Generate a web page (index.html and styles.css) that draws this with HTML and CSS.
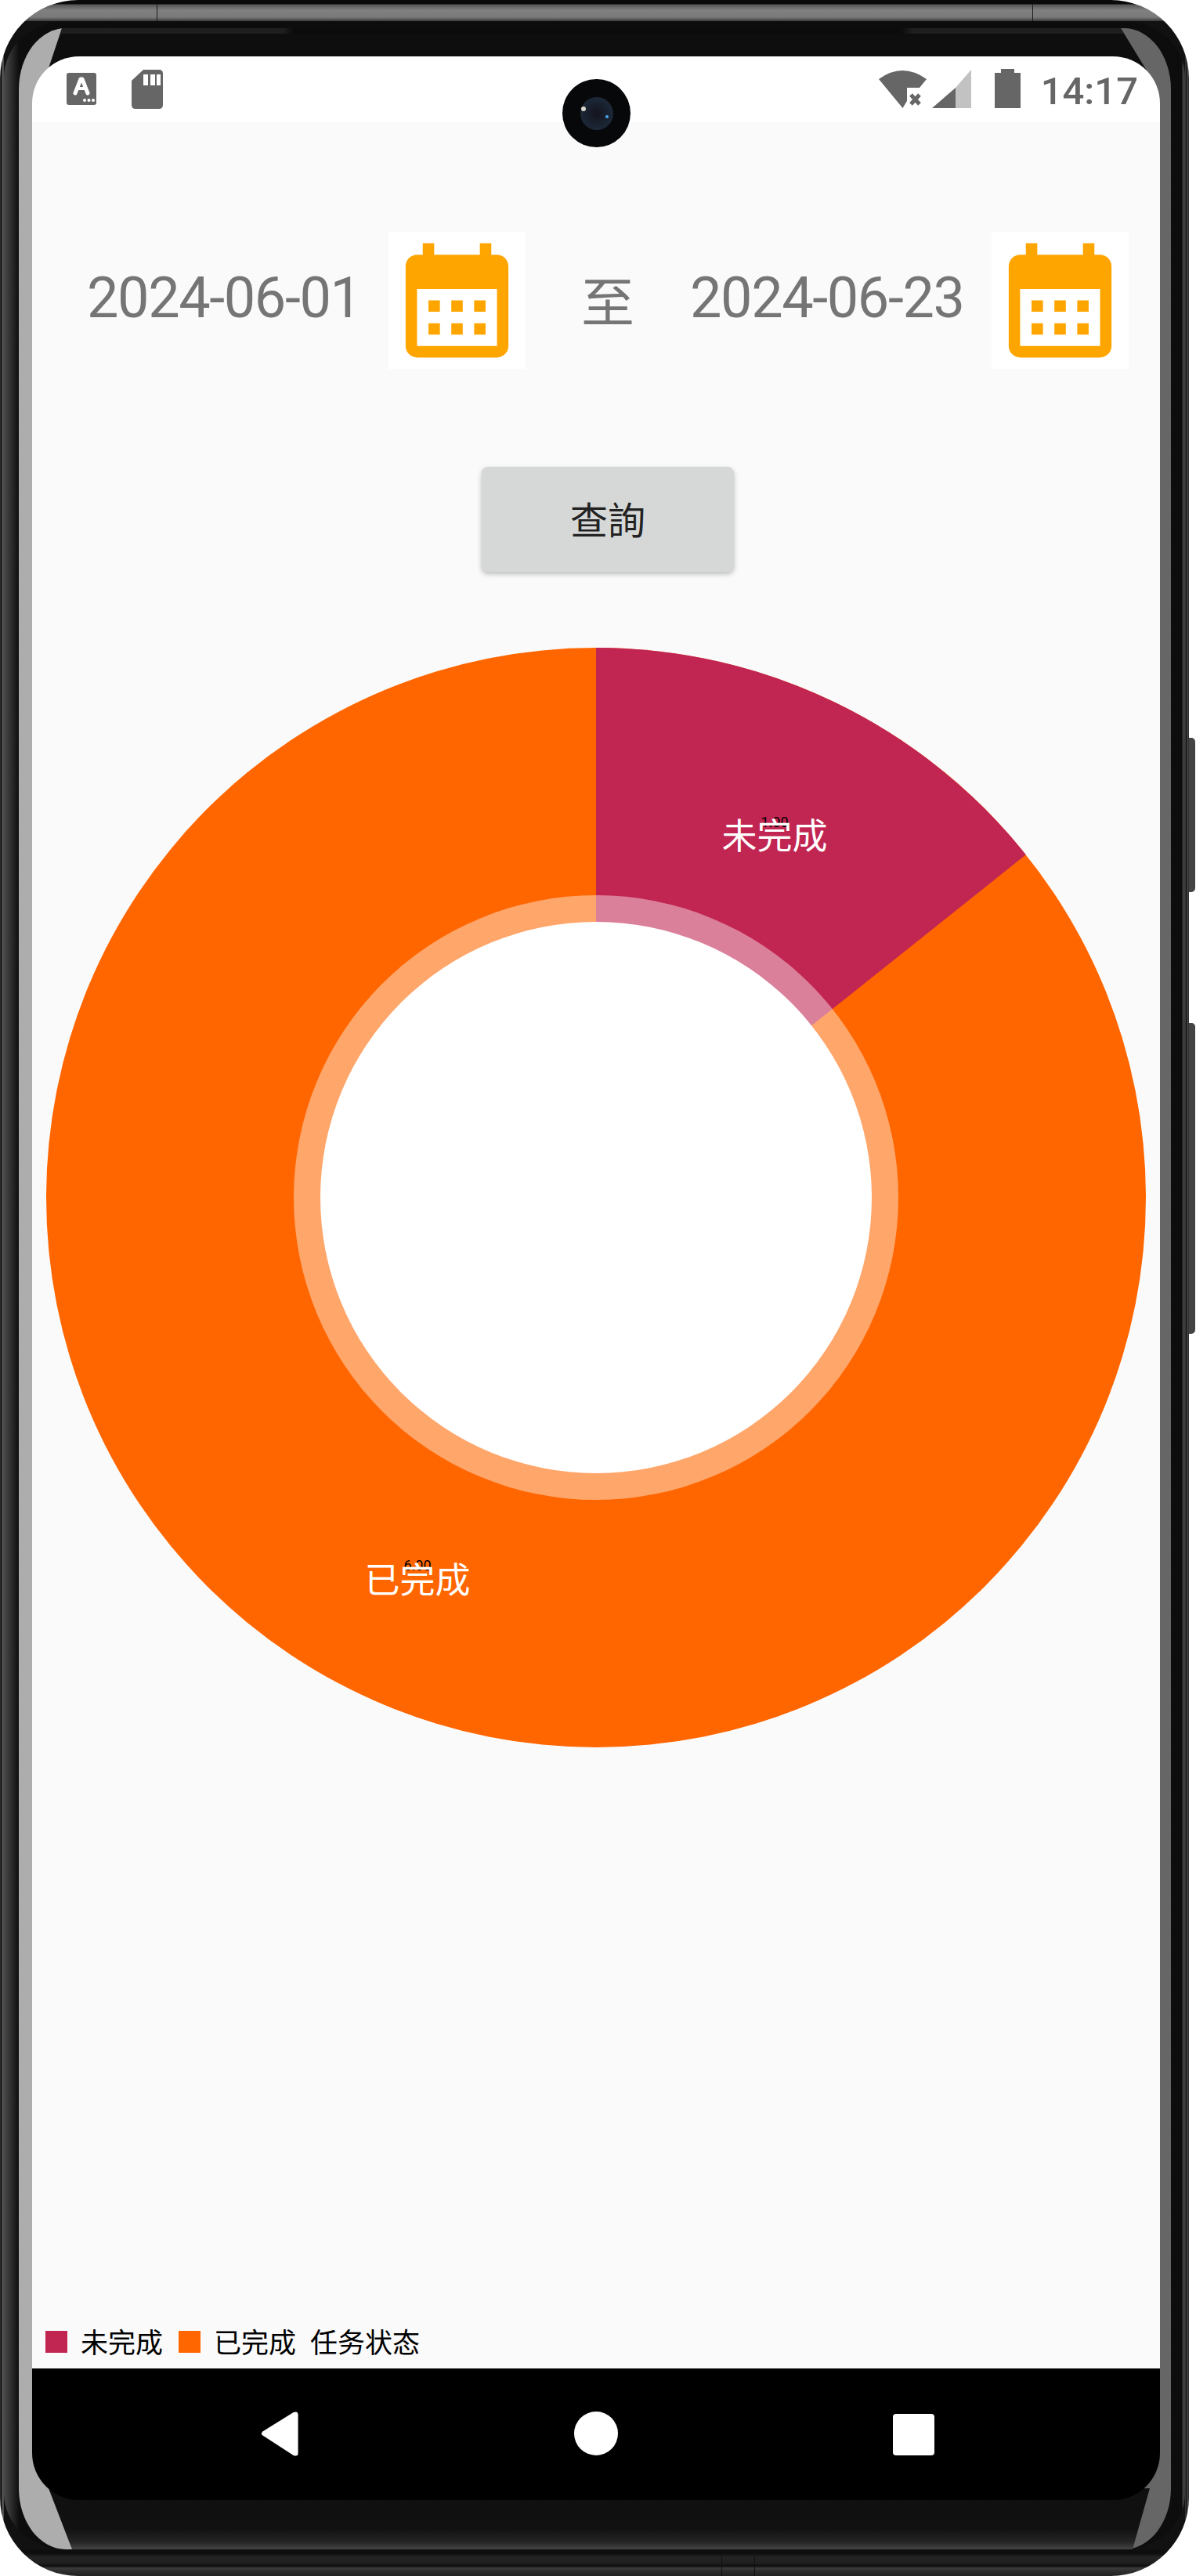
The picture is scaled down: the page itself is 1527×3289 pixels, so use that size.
FILE: index.html
```html
<!DOCTYPE html>
<html lang="zh-CN">
  <head>
    <title>任务状态</title>
    <meta charset="UTF-8">
    <link rel="stylesheet" href="styles.css">
  </head>
  <body>
    <div class="side-key side-key-short"></div>
    <div class="side-key side-key-long"></div>
    <div class="phone">
      <div class="bezel">
        <div class="glass">
          <div class="wedge-top"><i class="earpiece"></i></div>
          <div class="wedge-bottom"></div>
          <div class="screen">
            <header class="status-bar">
              <div class="status-left">
                <svg class="ico-a" viewBox="0 0 38 41"><rect width="38" height="41" rx="3" fill="#666"/><path d="M11 26 L18 8 H20 L27 26" fill="none" stroke="#fff" stroke-width="5" stroke-linecap="round" stroke-linejoin="round"/><path d="M13 20 H25" stroke="#fff" stroke-width="4"/><circle cx="23" cy="35" r="2" fill="#fff"/><circle cx="28.5" cy="35" r="2" fill="#fff"/><circle cx="34" cy="35" r="2" fill="#fff"/></svg>
                <svg class="ico-sd" viewBox="0 0 40 50"><path d="M15 0 H35 Q40 0 40 5 V45 Q40 50 35 50 H5 Q0 50 0 45 V14 Z" fill="#666"/><path d="M15 6 h6 v14 h-6z M24 6 h6 v14 h-6z M32 6 h5 v14 h-5z" fill="#fff"/></svg>
              </div>
              <div class="status-right">
                <svg class="ico-wifi" viewBox="0 0 61 48"><path d="M0 11 Q30 -11 61 11 L52 22 H36 V39 L30.500 48 Z" fill="#666"/><path d="M41 27 L52 39 M52 27 L41 39" stroke="#666" stroke-width="5" transform="translate(0 4)"/></svg>
                <svg class="ico-signal" viewBox="0 0 50 49"><path d="M50 0 V49 H30 V23 Z" fill="#c2c2c2"/><path d="M30 23 V49 H0 Z" fill="#666"/></svg>
                <svg class="ico-battery" viewBox="0 0 33 50"><path d="M8 0 H25 V5 H33 V50 H0 V5 H8 Z" fill="#666"/></svg>
                <span class="clock">14:17</span>
              </div>
            </header>

            <main class="content">
              <div class="range-row">
                <span class="date-text">2024-06-01</span>
                <div class="cal-btn">
                  <svg viewBox="0 -1 24 24"><path class="cal-shape" d="M19 3h-1V1h-2v2H8V1H6v2H5C3.890 3 3 3.900 3 5v14c0 1.100.890 2 2 2h14c1.100 0 2-.9 2-2V5c0-1.100-.9-2-2-2zm0 16H5V9h14v10zM7 11h2v2H7zm4 0h2v2h-2zm4 0h2v2h-2zM7 15h2v2H7zm4 0h2v2h-2zm4 0h2v2h-2z"/></svg>
                </div>
                <span class="range-to">至</span>
                <span class="date-text">2024-06-23</span>
                <div class="cal-btn">
                  <svg viewBox="0 -1 24 24"><path class="cal-shape" d="M19 3h-1V1h-2v2H8V1H6v2H5C3.890 3 3 3.900 3 5v14c0 1.100.890 2 2 2h14c1.100 0 2-.9 2-2V5c0-1.100-.9-2-2-2zm0 16H5V9h14v10zM7 11h2v2H7zm4 0h2v2h-2zm4 0h2v2h-2zM7 15h2v2H7zm4 0h2v2h-2zm4 0h2v2h-2z"/></svg>
                </div>
              </div>

              <button class="query-btn">查詢</button>

              <svg class="donut" viewBox="0 0 1404 1404">
                <circle cx="702" cy="702" r="702" fill="#ff6600"/>
                <path d="M702 702 V0 A702 702 0 0 1 1250.800 264.300 Z" fill="#c12552"/>
                <circle cx="702" cy="702" r="386" fill="#fff" fill-opacity="0.42"/>
                <circle cx="702" cy="702" r="352" fill="#fff"/>
                <text class="val" x="930" y="229">1.00</text>
                <text class="lbl" x="930" y="257">未完成</text>
                <text class="val" x="474" y="1178">6.00</text>
                <text class="lbl" x="474" y="1207">已完成</text>
              </svg>

              <div class="legend">
                <i class="swatch swatch-todo"></i><span class="legend-text">未完成</span>
                <i class="swatch swatch-done"></i><span class="legend-text">已完成</span>
                <span class="legend-text legend-title">任务状态</span>
              </div>
            </main>

            <nav class="nav-bar">
              <svg class="nav-back" viewBox="0 0 50 58"><path d="M3 31 Q0 29 3 26 L43 1 Q49 -1 49 4 V54 Q49 59 43 57 Z" fill="#fff"/></svg>
              <i class="nav-home"></i>
              <i class="nav-recent"></i>
            </nav>
          </div>
        </div>
      </div>
      <div class="camera"><div class="lens"><i class="glint glint-a"></i><i class="glint glint-b"></i></div></div>
    </div>
  </body>
</html>
```

FILE: styles.css
```css
:root {
  --font-body: "Roboto", "Noto Sans CJK SC", sans-serif;
  --font-cjk: "Noto Sans CJK SC", "Roboto", sans-serif;
  --color-grey: #757575;
  --color-icon: #666;
}

html, body {
  margin: 0;
  height: 100%;
}

body {
  background-color: #fff;
  width: 1527px;
  height: 3289px;
  overflow: hidden;
  position: relative;
}

/* phone frame: rim > bezel > glass > screen */
.phone {
  width: 1518px;
  height: 3289px;
  box-sizing: border-box;
  padding: 27px 5px 34px 5px;
  border-radius: 100px / 100px;
  background:
    linear-gradient(#1c1c1c, #1c1c1c) no-repeat 200px 5px / 1px 22px,
    linear-gradient(#1c1c1c, #1c1c1c) no-repeat 1318px 5px / 1px 22px,
    linear-gradient(#111, #111) no-repeat 921px 3255px / 1px 34px,
    linear-gradient(#111, #111) no-repeat 963px 3255px / 1px 34px,
    linear-gradient(to bottom, #0a0a0a 0, #0a0a0a 5px, #555 6px, #808080 13px, #7a7a7a 22px, #3a3a3a 27px, transparent 27px),
    linear-gradient(to top, #222 0, #2e2e2e 6px, #3a3a3a 10px, #0d0d0d 13px, #1e1e1e 16px, #242424 24px, #0e0e0e 29px, #0e0e0e 34px, transparent 34px),
    linear-gradient(to right, #333 0, #111 2px, #777 4px, #222 5px, transparent 5px),
    linear-gradient(to left, #222 0, #555 2px, #0a0a0a 3px, #444 5px, transparent 5px),
    #111;
  position: relative;
  overflow: hidden;
}

.bezel {
  height: 100%;
  box-sizing: border-box;
  padding: 9px 18px 0 19px;
  border-radius: 78px / 72px;
  background:
    linear-gradient(to right, #4a4a4a 0, #121212 18px, transparent 19px),
    linear-gradient(to left, #3c3c3c 0, #3c3c3c 3px, #0c0c0c 4px, transparent 18px),
    #0d0d0d;
}

.glass {
  height: 100%;
  box-sizing: border-box;
  padding: 36px 14px 63px 17px;
  border-radius: 60px / 78px;
  background: linear-gradient(to right, #adadad 50%, #666 50%);
  position: relative;
}

.wedge-top {
  position: absolute;
  top: 0;
  left: 37px;
  width: 1403px;
  height: 54px;
  background-color: #0e0e0e;
  clip-path: polygon(18px 0, calc(100% - 33px) 0, 100% 100%, 0 100%);
}

.earpiece {
  position: absolute;
  top: 0;
  left: 0;
  width: 100%;
  height: 7px;
  background: linear-gradient(to right, #2a2a2a 0, #2a2a2a 300px, #0a0a0a 314px, #0a0a0a 1090px, #2a2a2a 1104px);
  opacity: 0.6;
}

.wedge-bottom {
  position: absolute;
  bottom: 0;
  left: 38px;
  width: 1406px;
  height: 78px;
  background: linear-gradient(to bottom, #0f0f0f 0, #111 66%, #252525 88%, #454545 100%);
  clip-path: polygon(0 0, 100% 0, calc(100% - 22px) 100%, 30px 100%);
}

.screen {
  height: 100%;
  display: flex;
  flex-direction: column;
  border-radius: 60px / 60px;
  overflow: hidden;
  position: relative;
}

.side-key {
  position: absolute;
  left: 1517px;
  width: 9px;
  background: #444;
  border-radius: 0 5px 5px 0;
}

.side-key-short {
  top: 942px;
  height: 197px;
}

.side-key-long {
  top: 1306px;
  height: 397px;
}

/* status bar */
.status-bar {
  height: 84px;
  background-color: #fff;
  display: flex;
  justify-content: space-between;
  flex-shrink: 0;
}

.status-left {
  display: flex;
  gap: 45px;
  padding-left: 44px;
  align-items: flex-start;
}

.ico-a {
  width: 38px;
  height: 41px;
  margin-top: 21px;
}

.ico-sd {
  width: 40px;
  height: 50px;
  margin-top: 17px;
}

.status-right {
  display: flex;
  align-items: flex-start;
  padding-right: 28px;
}

.ico-wifi {
  width: 61px;
  height: 48px;
  margin-top: 18px;
}

.ico-signal {
  width: 50px;
  height: 49px;
  margin: 17px 0 0 7px;
}

.ico-battery {
  width: 33px;
  height: 50px;
  margin: 16px 0 0 30px;
}

.clock {
  font-family: var(--font-body);
  font-size: 49px;
  font-weight: 500;
  line-height: 50px;
  color: var(--color-icon);
  margin: 20px 0 0 26px;
}

/* app content */
.content {
  flex: 1;
  background-color: #fafafa;
  position: relative;
  display: flex;
  flex-direction: column;
  align-items: flex-start;
}

.range-row {
  display: flex;
  align-items: center;
  margin-top: 140px;
  padding-left: 70px;
  height: 175px;
}

.date-text {
  font-family: var(--font-body);
  font-size: 72px;
  letter-spacing: -1.4px;
  color: var(--color-grey);
  line-height: 82px;
  width: 385px;
  margin-top: -6px;
  white-space: nowrap;
}

.cal-btn {
  width: 175px;
  height: 175px;
  background-color: #fff;
  flex-shrink: 0;
}

.cal-btn svg {
  display: block;
  width: 175px;
  height: 175px;
}

.cal-shape {
  fill: #ffa500;
}

.range-to {
  font-family: var(--font-cjk);
  font-size: 68px;
  color: var(--color-grey);
  width: 210px;
  text-align: center;
  margin-top: -4px;
  line-height: 82px;
}

.query-btn {
  font-family: var(--font-cjk);
  font-size: 48px;
  color: #222;
  background-color: #d6d8d7;
  border: 0;
  border-radius: 8px;
  width: 322px;
  height: 134px;
  margin: 125px 0 0 574px;
  padding: 0 0 5px;
  box-shadow: 0 3px 6px rgba(0, 0, 0, 0.25);
}

.donut {
  position: absolute;
  left: 18px;
  top: 671px;
  width: 1404px;
  height: 1404px;
}

.val {
  font-family: var(--font-body);
  font-size: 18px;
  fill: #000;
  text-anchor: middle;
}

.lbl {
  font-family: var(--font-cjk);
  font-size: 45px;
  fill: #fff;
  text-anchor: middle;
}

.legend {
  position: absolute;
  left: 17px;
  bottom: 20px;
  height: 28px;
  display: flex;
  align-items: center;
}

.swatch {
  width: 28px;
  height: 28px;
}

.swatch-todo {
  background-color: #c12552;
}

.swatch-done {
  background-color: #ff6600;
  margin-left: 18px;
}

.legend-text {
  font-family: var(--font-cjk);
  font-size: 35px;
  color: #000;
  margin: -3px 2px 0 17px;
  white-space: nowrap;
}

.legend-title {
  margin-left: 16px;
}

/* navigation bar */
.nav-bar {
  height: 168px;
  background-color: #000;
  flex-shrink: 0;
  position: relative;
}

.nav-back, .nav-home, .nav-recent {
  position: absolute;
}

.nav-back {
  left: 291px;
  top: 55px;
  width: 50px;
  height: 57px;
}

.nav-home {
  left: 692px;
  top: 55px;
  width: 56px;
  height: 56px;
  border-radius: 50%;
  background-color: #fff;
}

.nav-recent {
  left: 1099px;
  top: 58px;
  width: 53px;
  height: 53px;
  border-radius: 4px;
  background-color: #fff;
}

/* hole punch camera */
.camera {
  position: absolute;
  left: 718px;
  top: 101px;
  width: 87px;
  height: 87px;
  border-radius: 50%;
  background-color: #070809;
  display: flex;
  align-items: center;
  justify-content: center;
}

.lens {
  width: 42px;
  height: 42px;
  border-radius: 50%;
  background: radial-gradient(circle at 50% 50%, #14141e, #1c2838 70%, #0b1018);
  position: relative;
}

.glint {
  position: absolute;
  border-radius: 50%;
}

.glint-a {
  left: 1px;
  top: 12px;
  width: 6px;
  height: 6px;
  background-color: #d8d8c8;
}

.glint-b {
  left: 32px;
  top: 23px;
  width: 4px;
  height: 4px;
  background-color: #4aa8e8;
}
```
